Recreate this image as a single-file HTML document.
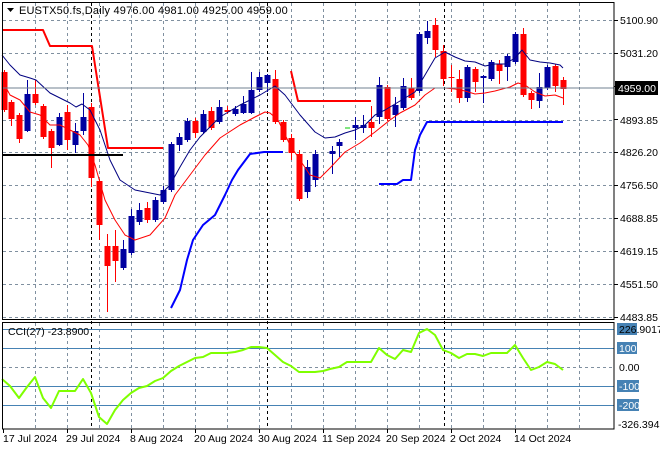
<!DOCTYPE html>
<html><head><meta charset="utf-8"><style>
body{margin:0;background:#fff;width:660px;height:450px;overflow:hidden}
svg{display:block;font-family:"Liberation Sans",sans-serif;font-size:10.5px}
</style></head><body>
<svg id="s" width="660" height="450" xmlns="http://www.w3.org/2000/svg">
<rect width="660" height="450" fill="#fff"/>
<g id="grid" stroke="#8090a0" stroke-dasharray="3,3" stroke-width="1"></g>
<g id="cci"></g>
<g id="c"></g>
<g fill="none" stroke-linejoin="round">
<polyline stroke="#000080" stroke-width="1" points="2,55 10,65 20,75 30,78 36,80 50,93 60,98 70,103 76,107 82,104 90,110 100,130 110,160 120,180 135,190 150,193 160,195 170,185 180,167 190,150 200,137 220,117 240,105 260,95 270,89 275,86 285,95 300,115 315,132 325,138 335,137 345,133 355,130 365,125 375,115 385,110 395,104 405,98 415,92 425,75 435,58 445,52 455,57 465,61 475,62 485,66 495,64 505,64 515,58 522,50 530,60 540,62 550,63 560,65 563,68"/>
<polyline stroke="#ff0000" stroke-width="1" points="2,80 10,95 20,100 30,112 40,115 50,125 60,125 70,130 80,135 88,145 95,165 105,200 115,220 125,235 135,240 150,235 165,218 175,195 190,175 205,155 220,138 240,125 255,117 265,112 270,113 278,120 290,145 300,160 310,175 320,178 330,168 345,152 360,143 375,132 390,120 400,113 415,105 425,95 435,88 445,88 455,89 465,91 475,94 485,93 495,91 510,87 518,83 525,85 535,92 545,96 555,95 563,98"/>
<polyline stroke="#ff0000" stroke-width="2" points="2,30 43,30 50,46 92,46 108,148 163,148"/>
<polyline stroke="#ff0000" stroke-width="2" points="291,71 298,101 371,101"/>
<polyline stroke="#0000ff" stroke-width="2" points="171,308 180,290 187,260 193,240 203,225 215,215 225,195 232,180 238,170 250,154 264,152 283,152"/>
<polyline stroke="#0000ff" stroke-width="2" points="379,184 397,184 403,180 411,180 415,150 420,135 427,122 563,122"/>
<line x1="2" y1="155" x2="123" y2="155" stroke="#000" stroke-width="2"/>
<line x1="345" y1="128" x2="350" y2="128" stroke="#00cc00" stroke-width="1"/>
<polyline stroke="#7fff00" stroke-width="2" points="2,379 10,386 19,398 27,387 35,377 43,398 51,408 59,391 67,391 75,391 83,379 91,393 99,417 107,424 115,410 123,400 131,393 139,388 147,386 155,381 163,378 171,371 179,366 187,362 195,358 203,357 211,353 219,353 227,353 235,352 243,350 251,347 259,347 267,348 275,355 283,362 291,366 299,372 307,372 315,372 323,371 330,369 339,367 347,362 355,362 363,362 371,362 379,348 387,355 395,359 403,350 411,352 419,333 427,329 435,335 443,350 451,353 459,358 467,354 475,354 483,356 491,353 499,353 507,353 515,345 523,358 531,370 539,367 547,362 555,364 563,370"/>
</g>
<line x1="2" y1="88" x2="614" y2="88" stroke="#708090" stroke-width="1"/>
<rect x="2.5" y="2.5" width="611.5" height="317" fill="none" stroke="#000"/>
<rect x="2.5" y="322.5" width="611.5" height="106.5" fill="none" stroke="#000"/>
<g fill="#000">
<text x="19" y="14" font-size="11" letter-spacing="0.2">EUSTX50.fs,Daily  4976.00 4981.00 4925.00 4959.00</text>
<path d="M7,8 h7 l-3.5,4z"/>
<text x="8" y="335">CCI(27) -23.8900</text>
<text x="620" y="24">5100.90</text><text x="620" y="57">5031.20</text>
<text x="620" y="124">4893.85</text><text x="620" y="156">4826.20</text>
<text x="620" y="189">4756.50</text><text x="620" y="222">4688.85</text>
<text x="620" y="255">4619.15</text><text x="620" y="288">4551.50</text>
<text x="620" y="321">4483.85</text>
<rect x="615" y="81" width="43" height="14" fill="#000"/>
<text x="618" y="92" fill="#fff">4959.00</text>
<rect x="617" y="323" width="20" height="12" fill="#4682b4"/>
<text x="619" y="333">226.9017</text>
<rect x="617" y="342" width="20" height="12" fill="#4682b4"/><text x="619" y="352" fill="#fff">100</text>
<text x="619" y="371">0.00</text>
<rect x="617" y="380" width="22" height="12" fill="#4682b4"/><text x="619" y="390" fill="#fff">-100</text>
<rect x="617" y="399" width="22" height="12" fill="#4682b4"/><text x="619" y="409" fill="#fff">-200</text>
<text x="618" y="428">-326.3947</text>
<text x="3" y="442">17 Jul 2024</text><text x="66" y="442">29 Jul 2024</text>
<text x="130" y="442">8 Aug 2024</text><text x="194" y="442">20 Aug 2024</text>
<text x="258" y="442">30 Aug 2024</text><text x="322" y="442">11 Sep 2024</text>
<text x="386" y="442">20 Sep 2024</text><text x="450" y="442">2 Oct 2024</text>
<text x="514" y="442">14 Oct 2024</text>
</g>
<script>
var NS="http://www.w3.org/2000/svg";
function el(p,t,a){var e=document.createElementNS(NS,t);for(var k in a)e.setAttribute(k,a[k]);p.appendChild(e);return e;}
var g=document.getElementById('grid');
[20,53,120,152,185,218,251,284,317,367].forEach(function(y){el(g,'line',{x1:3,x2:614,y1:y+.5,y2:y+.5});});
for(var x=35;x<=579;x+=32){el(g,'line',{x1:x+.5,x2:x+.5,y1:3,y2:320});el(g,'line',{x1:x+.5,x2:x+.5,y1:323,y2:429});}
[91,267,444].forEach(function(x){el(g,'line',{x1:x+.5,x2:x+.5,y1:3,y2:429,stroke:'#000'});});
var ci=document.getElementById('cci');
[329,348,386,405].forEach(function(y){el(ci,'line',{x1:3,x2:614,y1:y+.5,y2:y+.5,stroke:'#4682b4'});});
for(var x=3;x<=515;x+=64){el(ci,'line',{x1:x+.5,x2:x+.5,y1:429,y2:433,stroke:'#000'});}
for(var y=20;y<=317;y+=33){el(ci,'line',{x1:614,x2:618,y1:y+.5,y2:y+.5,stroke:'#000'});}
var C=[[4,'r',72,110,70,112],[11,'r',102,119,100,126],[19,'r',115,139,113,143],[27,'b',94,131,80,132],[35,'r',94,103,80,105],[43,'r',106,137,104,139],[51,'r',131,148,129,168],[59,'b',117,145,113,146],[67,'r',112,140,105,150],[75,'b',131,145,123,153],[83,'b',117,131,93,135],[91,'r',107,178,103,187],[99,'r',181,225,179,240],[107,'r',246,266,234,312],[115,'r',246,261,230,282],[123,'b',249,268,240,270],[131,'b',216,253,209,255],[139,'b',210,222,203,225],[147,'r',208,220,202,223],[155,'b',200,220,197,222],[163,'b',190,202,186,204],[171,'b',144,190,142,192],[179,'b',137,145,133,151],[187,'b',121,140,118,142],[195,'r',121,133,118,138],[203,'b',114,132,110,134],[211,'r',111,128,107,130],[219,'b',107,122,100,124],[227,'r',110,112,106,114],[235,'b',109,114,106,116],[243,'b',104,113,96,114],[251,'b',90,113,72,114],[259,'b',77,90,72,92],[267,'b',75,83,74,92],[275,'r',79,122,70,124],[283,'r',122,140,120,142],[291,'r',138,153,134,160],[299,'r',154,199,150,201],[307,'b',167,192,160,198],[315,'b',154,180,150,187],[332,'b',151,154,146,174],[339,'b',142,146,139,157],[355,'b',125,128,117,140],[363,'b',125,128,115,133],[371,'r',122,128,106,137],[379,'b',85,117,77,124],[387,'r',87,119,85,121],[395,'b',105,115,97,127],[403,'b',86,108,78,110],[411,'r',88,98,78,100],[419,'b',34,91,32,93],[427,'b',31,38,21,44],[435,'r',25,50,18,57],[443,'r',51,79,45,86],[451,'r',77,78,65,92],[459,'r',79,98,70,103],[467,'b',67,98,65,102],[475,'r',69,82,67,92],[483,'b',76,78,75,103],[491,'b',62,79,60,81],[499,'r',64,71,60,84],[507,'b',56,67,54,81],[515,'b',34,62,32,64],[523,'r',34,95,28,97],[531,'r',93,100,91,109],[539,'b',87,101,73,108],[547,'b',67,88,65,90],[555,'r',66,86,64,92],[563,'r',80,89,77,105]];
var cg=document.getElementById('c');
C.forEach(function(d){var col=d[1]=='b'?'#0000a0':'#ff0000';
el(cg,'line',{x1:d[0]+.5,x2:d[0]+.5,y1:d[4],y2:d[5],stroke:col});
el(cg,'rect',{x:d[0]-2.5,y:d[2],width:6,height:Math.max(1,d[3]-d[2]),fill:col});});
</script>
</svg>
</body></html>
